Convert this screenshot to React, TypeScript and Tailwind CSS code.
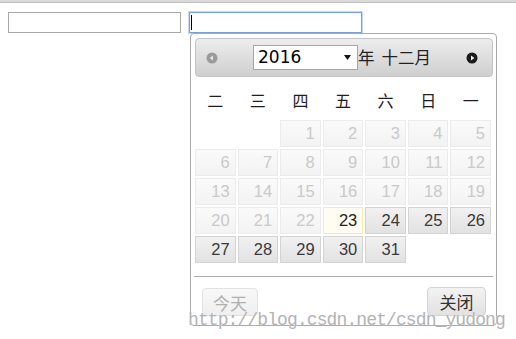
import React from "react";

type DayState = "off" | "today" | "on";

const weekdays = ["二", "三", "四", "五", "六", "日", "一"];

// Dec 2016, week starting Tuesday -> the 1st falls in column 3
const cells: Array<{ day: number; state: DayState } | null> = [
  null,
  null,
  ...Array.from({ length: 31 }, (_, i) => {
    const day = i + 1;
    const state: DayState = day < 23 ? "off" : day === 23 ? "today" : "on";
    return { day, state };
  }),
];

function DayCell({ day, state }: { day: number; state: DayState }) {
  const look =
    state === "off"
      ? "border-[#ebebeb] bg-gradient-to-b from-[#fafafa] to-[#f3f3f3] text-[#c9c9c9]"
      : state === "today"
      ? "border-[#f8eba6] bg-[#fffdf1] text-[#222]"
      : "border-[#d3d3d3] bg-gradient-to-b from-[#f1f1f1] to-[#e2e2e2] text-[#3a3a3a]";
  return (
    <div
      className={`h-[27px] border flex items-center justify-end pr-[5px] text-[16.5px] font-['Liberation_Sans',sans-serif] ${look}`}
    >
      {day}
    </div>
  );
}

export default function App() {
  return (
    <div className="relative w-[516px] h-[339px] bg-white overflow-hidden font-['DejaVu_Sans',sans-serif]">
      <div className="h-[3px] bg-[#dadada] border-b border-[#bfbfbf]" />

      <div className="flex gap-[8px] pl-[8px] pt-[9px]">
        <div className="w-[173px] h-[21px] border border-[#a9a9a9] bg-white" />
        <div className="w-[173px] h-[21px] border border-[#7b9fdc] bg-white shadow-[0_0_0_1px_#c9d9f3] flex items-center pl-[1px]">
          <div className="w-px h-[15px] bg-black" />
        </div>
      </div>

      {/* datepicker popup */}
      <div className="absolute left-[190px] top-[33px] w-[307px] h-[293px] border border-[#aaaaaa] rounded-[4px] bg-white pt-[4px] pl-[4px]">
        <div className="relative w-[298px] h-[39px] rounded-[4px] border border-[#c4c4c4] bg-gradient-to-b from-[#ededed] to-[#cfcfcf] flex items-center">
          <svg className="ml-[10px]" width="12" height="12" viewBox="0 0 12 12">
            <circle cx="6" cy="6" r="5.5" fill="#9a9a9a" />
            <path d="M3.6 6 L7 3.6 L7 8.4 Z" fill="#e4e4e4" />
          </svg>
          <div className="ml-[35px] w-[105px] h-[25px] border border-[#a6a6a6] bg-white flex items-center pl-[4px] text-[17px] text-black">
            <span className="flex-1 leading-none">2016</span>
            <svg className="mr-[6px]" width="7" height="5" viewBox="0 0 7 5">
              <path d="M0 0 H7 L3.5 5 Z" fill="#111" />
            </svg>
          </div>
          <div className="flex items-center text-[16.5px] text-[#222] font-['Noto_Sans_CJK_SC',sans-serif] leading-none">
            <span>年</span>
            <span className="ml-[7px]">十二月</span>
          </div>
          <svg className="absolute right-[14px] top-[13px]" width="12" height="12" viewBox="0 0 12 12">
            <circle cx="6" cy="6" r="5.5" fill="#1a1a1a" />
            <path d="M8.4 6 L5 3.6 L5 8.4 Z" fill="#f0f0f0" />
          </svg>
        </div>

        <div className="mt-[2px] w-[296px] h-[41px] grid grid-cols-7 gap-x-[2px] items-center text-center text-[16px] text-[#1e1e1e] font-['Noto_Sans_CJK_SC',sans-serif]">
          {weekdays.map((w) => (
            <span key={w}>{w}</span>
          ))}
        </div>

        <div className="w-[296px] grid grid-cols-7 gap-x-[2px] gap-y-[2px]">
          {cells.map((c, i) =>
            c ? <DayCell key={i} day={c.day} state={c.state} /> : <div key={i} className="h-[27px]" />
          )}
        </div>

        <div className="mt-[13px] -ml-[1px] w-[299px] h-px bg-[#ababab]" />

        <div className="w-[298px] flex justify-between px-[7px] mt-[10px] font-['Noto_Sans_CJK_SC',sans-serif] text-[17px] leading-none">
          <div className="w-[56px] h-[28px] mt-[1px] rounded-[4px] border border-[#e2e2e2] bg-gradient-to-b from-[#f8f8f8] to-[#efefef] text-[#b0b0b0] flex items-center justify-center">
            今天
          </div>
          <div className="w-[59px] h-[29px] rounded-[4px] border border-[#d3d3d3] bg-gradient-to-b from-[#f2f2f2] to-[#e2e2e2] text-[#333] flex items-center justify-center">
            关闭
          </div>
        </div>
      </div>

      {/* blog watermark */}
      <div className="absolute left-[188px] top-[311px] text-[18px] leading-[18px] tracking-[-0.9px] text-[#b3b3b3] font-['Liberation_Mono',monospace] whitespace-nowrap [text-shadow:0_0_1px_#fff]">
        http://blog.csdn.net/csdn_yudong
      </div>
    </div>
  );
}
